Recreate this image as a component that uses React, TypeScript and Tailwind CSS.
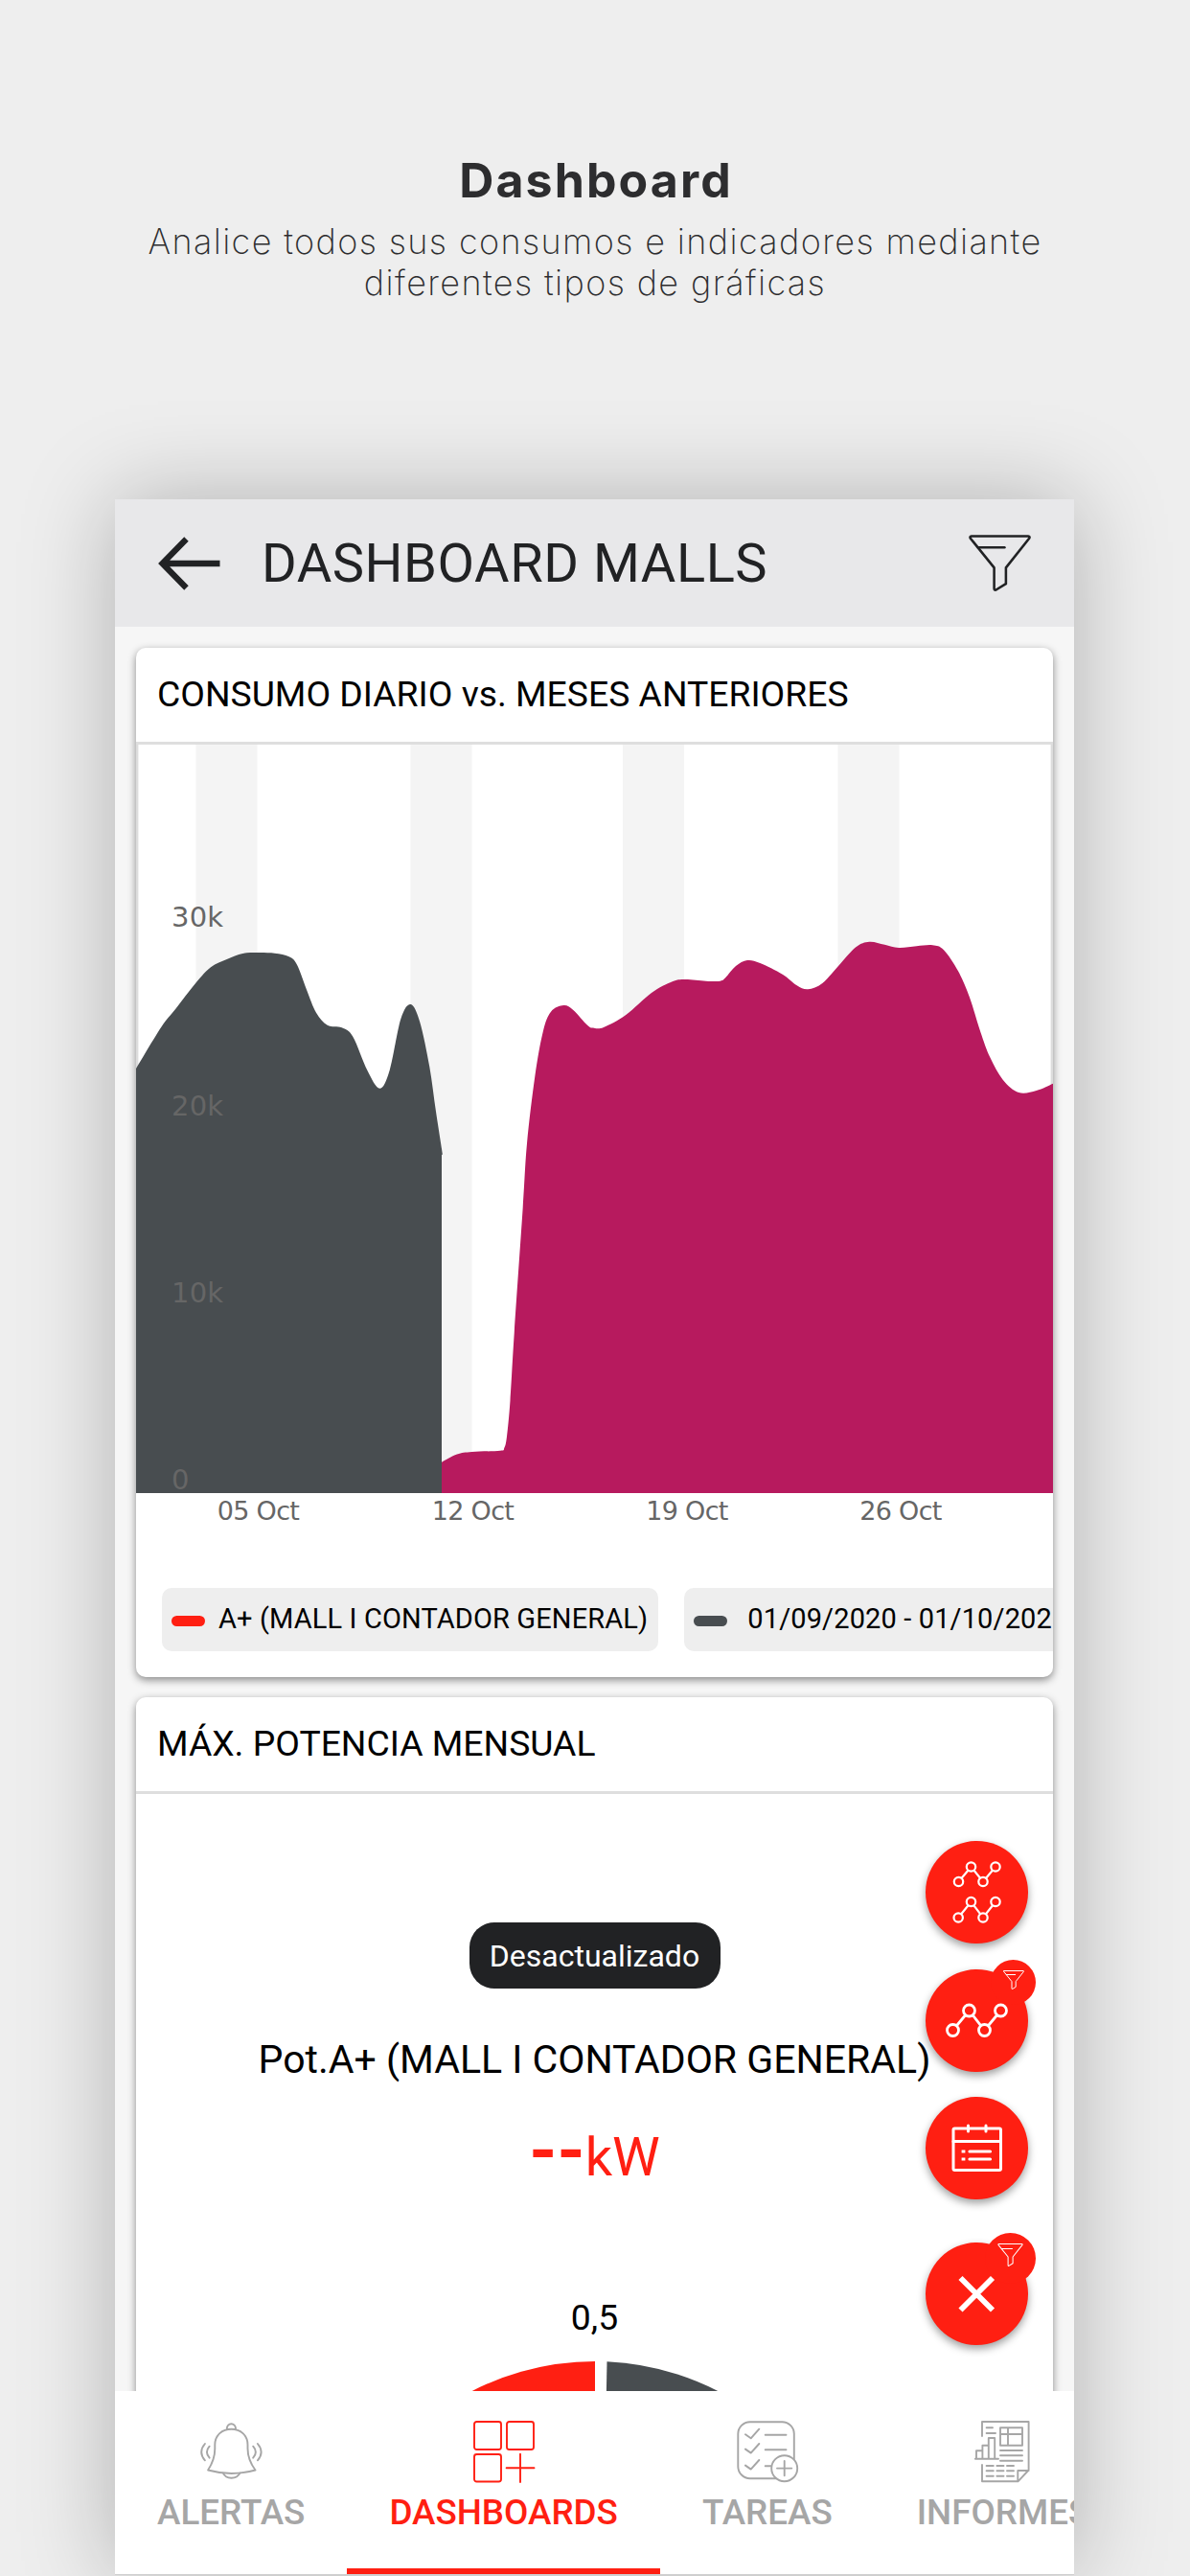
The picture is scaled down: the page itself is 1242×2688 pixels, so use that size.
import type { ReactNode } from "react";

type Point = [number, number];

const previousMonth: Point[] = [
  [142, 1115], [168.3, 1071.7], [183.3, 1052.7], [204.3, 1025.7], [220, 1009.3], [236.7, 1001], [253.3, 995],
  [268.3, 994], [286.7, 994.7], [301.7, 998.3], [310, 1006.7], [320, 1032.7], [330, 1056.7], [341.7, 1069.7],
  [356.7, 1072.3], [368.3, 1081.7], [383.3, 1116.7], [396.3, 1135.7], [406.7, 1116.7], [418.3, 1063.3],
  [428.7, 1048], [438.3, 1066.7], [448.3, 1113.3], [455, 1160], [462, 1204.7],
];

const currentMonth: Point[] = [
  [461, 1525.7], [477, 1517.5], [492.5, 1515], [522, 1513.8], [526.3, 1511], [529, 1499], [532.5, 1461.4],
  [536.8, 1390], [545.7, 1260], [550, 1193.3], [558.3, 1123.3], [566.7, 1076.7], [575, 1055.7], [588.3, 1049],
  [598.3, 1054], [613.3, 1070], [620, 1072.7], [630, 1072], [653.3, 1059], [680, 1036], [701.7, 1024.3],
  [715, 1022], [736.7, 1023.7], [751.7, 1023.7], [758, 1019.3], [768, 1008], [780, 1002], [793.3, 1005],
  [816.7, 1016.7], [831.7, 1028.3], [843.3, 1032.3], [858.3, 1026], [875, 1008], [893.3, 988.3], [907.3, 982.7],
  [923.3, 985.7], [938, 989], [956.7, 987.3], [973.3, 986.3], [985, 991.3], [1000, 1013.3], [1011.7, 1040],
  [1023.3, 1076.7], [1033.3, 1103.3], [1046.7, 1126.7], [1063.3, 1140], [1081.7, 1138], [1099, 1130.7],
];

const weekends = [204.5, 428.5, 650, 874.5];

const yLabels = [
  { text: "30k", y: 966.5 },
  { text: "20k", y: 1164 },
  { text: "10k", y: 1358.5 },
  { text: "0", y: 1553.5 },
];

const xLabels = [
  { text: "05 Oct", x: 269.5 },
  { text: "12 Oct", x: 493.5 },
  { text: "19 Oct", x: 717 },
  { text: "26 Oct", x: 940 },
];

const BASELINE = 1558;

function areaPath(points: Point[], endX: number) {
  let d = `M${points[0][0]} ${BASELINE}L${points[0][0]} ${points[0][1]}`;
  for (let i = 0; i < points.length - 1; i++) {
    const p0 = points[i - 1] ?? points[i];
    const p1 = points[i];
    const p2 = points[i + 1];
    const p3 = points[i + 2] ?? p2;
    d += `C${p1[0] + (p2[0] - p0[0]) / 6} ${p1[1] + (p2[1] - p0[1]) / 6} ${p2[0] - (p3[0] - p1[0]) / 6} ${p2[1] - (p3[1] - p1[1]) / 6} ${p2[0]} ${p2[1]}`;
  }
  return `${d}H${endX}V${BASELINE}Z`;
}

function FunnelIcon({ className, strokeWidth }: { className: string; strokeWidth: number }) {
  return (
    <svg className={className} viewBox="0 0 66 60" fill="none" stroke="currentColor" strokeWidth={strokeWidth} strokeLinejoin="round" strokeLinecap="round">
      <path d="M3 1.5H63Q65.500 2 64 4L39.500 35V52L29 58.500Q27 59 27 57V35L2 4Q.6 2 3 1.500Z" />
      <path d="M10 13.500H38" />
    </svg>
  );
}

function TrendLine({ points, r, strokeWidth }: { points: Point[]; r: number; strokeWidth: number }) {
  return (
    <g fill="#ff1f12" stroke="#fff" strokeWidth={strokeWidth}>
      <polyline points={points.map((p) => p.join(",")).join(" ")} fill="none" />
      {points.map(([x, y]) => (
        <circle key={x} cx={x} cy={y} r={r} />
      ))}
    </g>
  );
}

function Fab({ children, badge }: { children: ReactNode; badge?: ReactNode }) {
  return (
    <div className="relative size-[107px]">
      <button className="block size-[107px] rounded-full bg-[#ff1f12] shadow-[0_4px_9px_rgba(0,0,0,0.38)]">
        <svg className="size-[107px]" viewBox="0 0 107 107" fill="none">{children}</svg>
      </button>
      {badge}
    </div>
  );
}

function Card({ title, className, children }: { title: string; className: string; children: ReactNode }) {
  return (
    <section className={`shrink-0 rounded-[10px] bg-white shadow-[0_3px_8px_rgba(0,0,0,0.45)] ${className}`}>
      <h2 className="flex h-[98px] items-center px-[22px] text-[37.3px] text-black">{title}</h2>
      <div className="h-[3px] bg-[#dedede]" />
      {children}
    </section>
  );
}

function LegendChip({ color, label, gap }: { color: string; label: string; gap: string }) {
  return (
    <div className="flex h-[66px] shrink-0 items-center rounded-[10px] bg-[#eeeeee] pr-[11px] pl-[10px]">
      <span className={`mt-[3px] h-[11px] w-[35px] rounded-full ${color}`} />
      <span className={`text-[29px] tracking-[0.13px] whitespace-nowrap text-black ${gap}`}>{label}</span>
    </div>
  );
}

function ConsumptionChart() {
  return (
    <svg className="block h-[823px] w-[957px]" viewBox="142 777 957 823">
      {weekends.map((x) => (
        <rect key={x} x={x} y={777} width={64} height={781} fill="#f4f4f4" />
      ))}
      <path d="M143.200 777V1115M1097.800 777V1132" stroke="#dcdcdc" strokeWidth={2.4} />
      <path d={areaPath(previousMonth, 461)} fill="#484d50" />
      <path d={areaPath(currentMonth, 1099)} fill="#b71a5e" />
      <g fill="#666" className="font-['DejaVu_Sans',sans-serif]">
        {yLabels.map((l) => (
          <text key={l.text} x={179} y={l.y} className="text-[29px] tracking-[0.2px]">{l.text}</text>
        ))}
        {xLabels.map((l) => (
          <text key={l.text} x={l.x} y={1585.5} textAnchor="middle" className="text-[27px] tracking-[-0.7px]">{l.text}</text>
        ))}
      </g>
    </svg>
  );
}

function BellIcon() {
  return (
    <>
      <path d="M27.800 8.500C27.500 1.500 37.300 1.500 37 8.500M8.100 51.500C13 44 15.300 38 15.300 29V25C15.300 15 23 8.700 32.400 8.700S49.500 15 49.500 25V29C49.500 38 52 44 57.500 51.500C41 56 24 56 8.100 51.500Z" />
      <path d="M23.900 54.700C27 61.500 38 61.500 41.400 54.700" />
      <path d="M4.900 24Q-2.500 32.700 4.900 41.300M9.600 26.700Q4.300 32.700 9.600 38.700M59.900 24Q67.300 32.700 59.900 41.300M55.200 26.700Q60.500 32.700 55.200 38.700" />
    </>
  );
}

function DashboardsIcon() {
  return (
    <>
      <rect x={1} y={1} width={28} height={29} rx={2.5} />
      <rect x={35} y={1} width={28} height={29} rx={2.5} />
      <rect x={1} y={35} width={28} height={28.500} rx={2.5} />
      <path d="M34.600 49.300H63.500M49 34.700V64" />
    </>
  );
}

function TasksIcon() {
  return (
    <>
      <rect x={1.3} y={1.2} width={58.500} height={59} rx={12.5} />
      <path d="M9 14.300L14.700 18.300L23.300 8.700M9 29.600L14.700 33.600L23.300 24M9 46.600L14.700 50.600L23.300 41M29.700 14.700H51.500M29.700 30.300H51.500M29.700 47.300H36" />
      <circle cx={49.700} cy={49.700} r={13.5} fill="#fff" />
      <path d="M42 49.600H57.300M49.700 42V57.200" />
    </>
  );
}

function ReportsIcon() {
  return (
    <>
      <path d="M10 16V1H58.600V51.500L47.500 63.300H10V46M58.600 52H47.300V63.300" />
      <path d="M29 7.300H52V25.700H29ZM37 7.300V25.700M29 14H52M14.600 7.300H21M14.600 13H24M29 31H52M29 36.300H52M29 41.700H52" />
      <path d="M2.900 39.700H27M4 39.700V31.300H10.400M10.400 39.700V25.700H16.800M16.800 39.700V18H23.200V39.700" />
      <path d="M14.600 47H21.800M25.400 47H32.500M36 47H43M14.600 52.300H21.800M25.400 52.300H32.500M36 52.300H43M14.600 57.700H21.800M25.400 57.700H32.500M36 57.700H43" />
    </>
  );
}

const tabs = [
  { label: "ALERTAS", icon: <BellIcon /> },
  { label: "DASHBOARDS", icon: <DashboardsIcon />, active: true },
  { label: "TAREAS", icon: <TasksIcon /> },
  { label: "INFORMES", icon: <ReportsIcon /> },
];

function BottomTabs() {
  return (
    <nav className="relative z-10 flex h-[192px] overflow-hidden border-b border-[#cfcfcf] bg-white">
      {tabs.map((tab) => (
        <button
          key={tab.label}
          className={`relative flex shrink-0 flex-col items-center px-[44px] pt-[31px] ${tab.active ? "text-[#ff1f12]" : "text-[#a6a6a6]"}`}
        >
          <svg className="size-16" viewBox="0 0 64 64" fill="none" stroke="currentColor" strokeWidth={1.9} strokeLinecap="round" strokeLinejoin="round" overflow="visible">
            {tab.icon}
          </svg>
          <span className="mt-[10px] text-[36.8px] leading-[44px] font-medium">{tab.label}</span>
          {tab.active && <span className="absolute inset-x-0 bottom-0 h-[6px] bg-[#ff1f12]" />}
        </button>
      ))}
    </nav>
  );
}

export default function App() {
  return (
    <div className="flex h-[2688px] w-[1242px] flex-col overflow-hidden bg-[#eeeeee] font-[Roboto,sans-serif]">
      <div className="h-[521px] shrink-0 pt-[158px] text-center font-[Inter,sans-serif] text-[#2d2d2f]">
        <h1 className="pl-[2px] text-[50px] leading-[60px] font-bold tracking-[2.1px]">Dashboard</h1>
        <p className="mt-[13px] text-[36px] leading-[43px] font-extralight tracking-[1.38px]">
          Analice todos sus consumos e indicadores mediante
          <br />
          diferentes tipos de gráficas
        </p>
      </div>

      <main className="relative ml-[120px] flex h-[2166px] w-[1001px] shrink-0 flex-col bg-[#f6f6f6] shadow-[0_0_90px_rgba(0,0,0,0.26)]">
        <header className="flex h-[133px] shrink-0 items-center bg-[#e8e8ea] pr-[45px] pl-[45px] text-[#212224]">
          <svg className="h-[56px] w-[65px]" viewBox="0 0 65 56" fill="none" stroke="currentColor" strokeWidth={6.300}>
            <path d="M29.500 2.500L4.500 28L29.500 53.500M4 28H64.500" />
          </svg>
          <h1 className="ml-[43px] flex-1 text-[56px] tracking-[0.55px]">DASHBOARD MALLS</h1>
          <FunnelIcon className="h-[59px] w-[65px]" strokeWidth={2.6} />
        </header>

        <div className="flex h-[1841px] shrink-0 flex-col gap-[21px] overflow-hidden px-[22px] pt-[22px]">
          <Card title="CONSUMO DIARIO vs. MESES ANTERIORES" className="h-[1074px]">
            <ConsumptionChart />
            <div className="mt-[57px] flex gap-[27px] overflow-hidden pl-[27px]">
              <LegendChip color="bg-[#ff1f12]" label="A+ (MALL I CONTADOR GENERAL)" gap="ml-[14px]" />
              <LegendChip color="bg-[#484d50]" label="01/09/2020 - 01/10/2020" gap="ml-[21px]" />
            </div>
          </Card>

          <Card title="MÁX. POTENCIA MENSUAL" className="h-[800px]">
            <div className="flex flex-col items-center pt-[134px] text-black">
              <span className="flex h-[69px] w-[262px] items-center justify-center rounded-[26px] bg-[#212224] text-[32px] text-white">
                Desactualizado
              </span>
              <p className="mt-[50px] text-[41px] leading-[48px]">Pot.A+ (MALL I CONTADOR GENERAL)</p>
              <p className="mt-[28px] flex h-[88px] items-baseline text-[56px] leading-[88px] text-[#ff1f12]">
                <span className="text-[74px] font-bold">--</span>kW
              </p>
              <p className="mt-[105px] text-[37.3px] leading-[48px]">0,5</p>
              <svg className="mt-[22px] h-[110px] w-[564px]" viewBox="0 0 564 110">
                <path d="M282 0A282 282 0 0 0 30 156H282Z" fill="#ff1f12" />
                <path d="M294.500 .3A282 282 0 0 1 534 156H291.500Z" fill="#484d50" />
              </svg>
            </div>
          </Card>
        </div>

        {/* floating actions over the cards */}
        <div className="absolute top-[1400px] right-[48px] z-10 flex flex-col gap-[26.500px]">
          <Fab>
            <TrendLine points={[[34.5, 42.5], [47.5, 27], [60, 42.5], [73, 27]]} r={4.7} strokeWidth={2.2} />
            <TrendLine points={[[34.2, 80], [47.5, 63.5], [60, 80], [73, 63.5]]} r={4.7} strokeWidth={2.2} />
          </Fab>
          <Fab
            badge={
              <span className="absolute -top-[10px] -right-[8px] flex size-[47px] items-center justify-center rounded-full bg-[#ff1f12] text-white">
                <FunnelIcon className="mb-[4px] h-[20px] w-[22px]" strokeWidth={3} />
              </span>
            }
          >
            <TrendLine points={[[28.5, 63.5], [45.5, 43], [61.5, 63.5], [78.5, 43]]} r={6} strokeWidth={2.8} />
          </Fab>
          <Fab>
            <g stroke="#fff" strokeWidth={3} strokeLinecap="round">
              <rect x={29} y={33} width={49.500} height={43.500} rx={1.500} />
              <path d="M29 46.500H78M44.500 30V36M63 30V36" />
              <path d="M46 57H67.500M46 65H67.500" strokeWidth={3.2} />
              <path d="M39.200 57h.6M39.200 65h.6" strokeWidth={3.2} strokeLinecap="square" />
            </g>
          </Fab>
          <div className="mt-[18px]">
            <Fab
              badge={
                <span className="absolute -top-[10px] -right-[8px] flex size-[53px] items-center justify-center rounded-full bg-[#ff1f12] text-white">
                  <FunnelIcon className="mb-[6px] h-[24px] w-[27px]" strokeWidth={2.6} />
                </span>
              }
            >
              <path d="M36.500 37L70 70.500M70 37L36.500 70.500" stroke="#fff" strokeWidth={5.800} />
            </Fab>
          </div>
        </div>

        <BottomTabs />
      </main>
    </div>
  );
}
